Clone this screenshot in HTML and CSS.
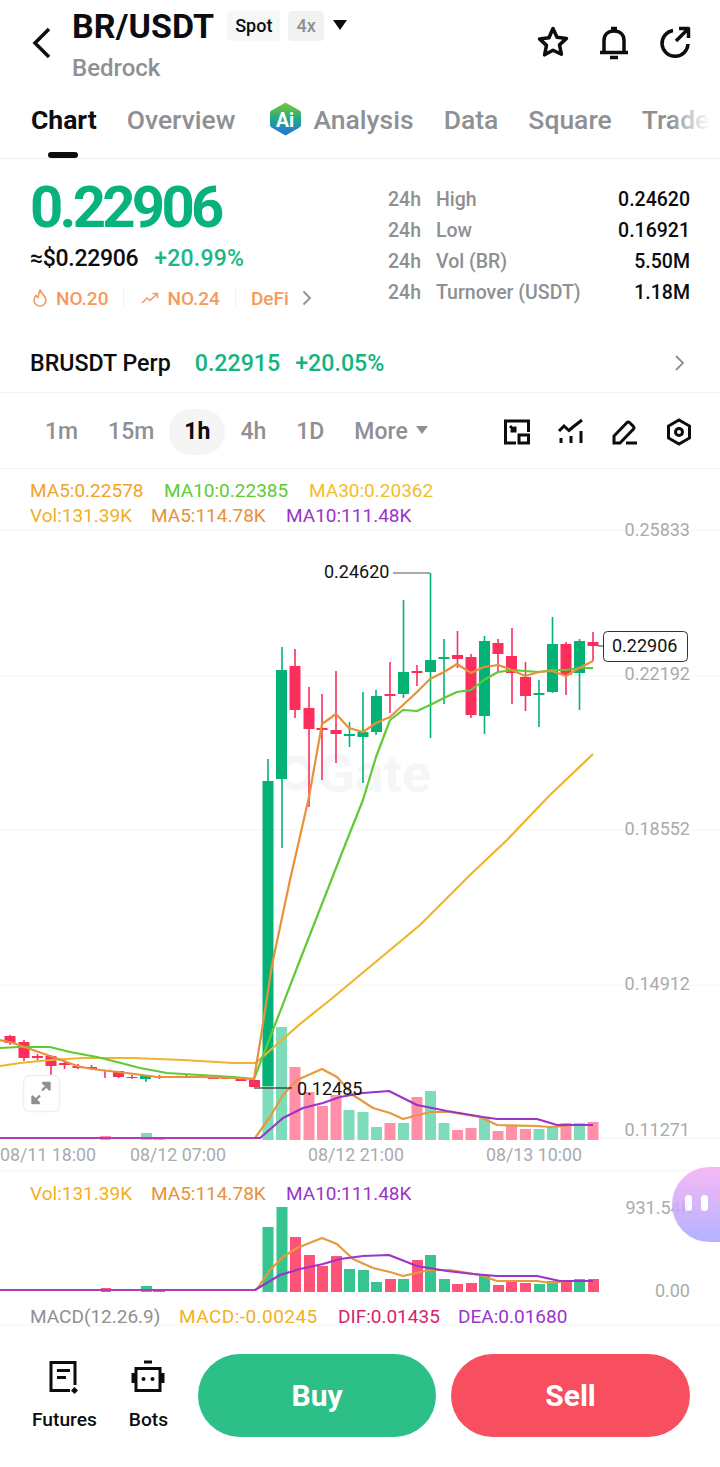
FILE: index.html
```html
<!DOCTYPE html>
<html lang="en">
<head>
  <meta charset="UTF-8" />
  <meta name="viewport" content="width=device-width, initial-scale=1.0" />
  <title>BR/USDT</title>
  <link rel="stylesheet" href="styles.css">
</head>
<body>
  <header class="top">
    <svg class="back" width="24" height="34" viewBox="0 0 24 34"><path d="M19 3 5 17l14 14" /></svg>
    <div class="pair">
      <div class="pair-line">
        <h1>BR/USDT</h1>
        <span class="badge">Spot</span>
        <span class="badge badge-grey">4x</span>
        <span class="caret"></span>
      </div>
      <div class="pair-name">Bedrock</div>
    </div>
    <div class="top-icons">
      <svg width="34" height="34" viewBox="0 0 34 34"><path d="M17 3.500l4 8.700 9.500 1.200-7 6.500 1.900 9.400L17 25.200l-8.400 4.600 1.900-9.400-7-6.500 9.500-1.200z" /></svg>
      <svg width="34" height="36" viewBox="0 0 34 36"><path d="M7 27V15.500C7 9.500 11 6 17 6s10 3.500 10 9.500V27M3 27.500h28M14 3.500h6M13 32.500h8" /></svg>
      <svg width="34" height="34" viewBox="0 0 34 34"><path d="M15 5.500A13 13 0 1 0 30 19M18 16 30 4M21 3.500h9.500V13" /></svg>
    </div>
  </header>

  <nav class="tabs">
    <a class="tab tab-on">Chart</a>
    <a class="tab">Overview</a>
    <a class="tab tab-ai">
      <svg width="33" height="36" viewBox="0 0 34 36">
        <defs>
          <linearGradient id="aiFill" x1="0" y1="0" x2="0" y2="1">
            <stop offset="0" stop-color="#7cc832" />
            <stop offset=".5" stop-color="#20a88a" />
            <stop offset="1" stop-color="#2a6fdc" />
          </linearGradient>
        </defs>
        <path fill="url(#aiFill)" d="M17 1l14 8a3 3 0 0 1 2 3v12a3 3 0 0 1-2 3l-14 8-14-8a3 3 0 0 1-2-3V12a3 3 0 0 1 2-3z" />
        <text class="ai-mark" x="16.500" y="26">Ai</text>
      </svg>
      Analysis
    </a>
    <a class="tab">Data</a>
    <a class="tab">Square</a>
    <a class="tab">Trade</a>
    <span class="tabs-fade"></span>
  </nav>

  <section class="stats">
    <div class="stats-left">
      <div class="price">0.22906</div>
      <div class="sub-price"><span>≈$0.22906</span><span class="up">+20.99%</span></div>
      <div class="tags">
        <svg class="tag-icon" width="16" height="18" viewBox="0 0 16 18"><path d="M8 1c.5 3 5.500 5 6 10a6 6 0 0 1-12 0c0-2 1-3.500 2-4.500.500 1 1 1.500 2 2C6.500 6 7 3.500 8 1z" /></svg>
        <span class="tag-text">NO.20</span>
        <i class="tag-sep"></i>
        <svg class="tag-icon" width="18" height="12" viewBox="0 0 18 12"><path d="M1 11l5-5 3 2.500L16 2M11.500 1.500H16.500V6" /></svg>
        <span class="tag-text">NO.24</span>
        <i class="tag-sep"></i>
        <span class="tag-text">DeFi</span>
        <svg class="tag-more" width="10" height="16" viewBox="0 0 10 16"><path d="M1.500 1.500 8 8l-6.500 6.500" /></svg>
      </div>
    </div>
    <div class="stats-right">
      <div class="stat-row"><span class="stat-h">24h</span><span class="stat-name">High</span><span class="stat-val">0.24620</span></div>
      <div class="stat-row"><span class="stat-h">24h</span><span class="stat-name">Low</span><span class="stat-val">0.16921</span></div>
      <div class="stat-row"><span class="stat-h">24h</span><span class="stat-name">Vol (BR)</span><span class="stat-val">5.50M</span></div>
      <div class="stat-row"><span class="stat-h">24h</span><span class="stat-name">Turnover (USDT)</span><span class="stat-val">1.18M</span></div>
    </div>
  </section>

  <section class="perp">
    <span class="perp-name">BRUSDT Perp</span>
    <span class="perp-num">0.22915</span>
    <span class="perp-num">+20.05%</span>
    <svg class="perp-more" width="11" height="18" viewBox="0 0 11 18"><path d="M2 2l7 7-7 7" /></svg>
  </section>

  <section class="times">
    <span class="time">1m</span>
    <span class="time">15m</span>
    <span class="time time-on">1h</span>
    <span class="time">4h</span>
    <span class="time">1D</span>
    <span class="time time-more">More<i class="more-caret"></i></span>
    <div class="tools">
      <svg width="28" height="28" viewBox="0 0 28 28"><path d="M13 25H2.500V3h23v11M7 8l5 5M7.500 13H12V8.500" /><rect x="16" y="17" width="9.500" height="8" /></svg>
      <svg width="28" height="28" viewBox="0 0 28 28"><path d="M2 13l5-5 5 4.500L16 9 25 2M4 20v5M14 18v7M24 13v12" /></svg>
      <svg width="28" height="28" viewBox="0 0 28 28"><path d="M3 25v-7L16 4.500a2 2 0 0 1 2.500 0l4 4a2 2 0 0 1 0 2.500L9 25zM15 25h11" /></svg>
      <svg width="28" height="28" viewBox="0 0 28 28"><path d="M14 2l10.500 6v12L14 26 3.500 20V8z" /><circle cx="14" cy="14" r="3.500" /></svg>
    </div>
  </section>

  <section class="chart">
    <svg class="chart-svg" width="720" height="856" viewBox="0 469 720 856">
      <!-- grid -->
      <path class="grid" d="M0 676H720M0 830H720M0 1138H720M0 1171H720M0 530H720M0 985H720" />
      <circle class="mark-ring" cx="296" cy="773" r="14" />
      <text class="mark" x="318" y="792">Gate</text>

      <text class="lg" x="30" y="497" fill="#f0a42a">MA5:0.22578</text>
      <text class="lg" x="164" y="497" fill="#5ecb36">MA10:0.22385</text>
      <text class="lg" x="309" y="497" fill="#f4bd2a">MA30:0.20362</text>
      <text class="lg" x="30" y="522" fill="#f2b01e">Vol:131.39K</text>
      <text class="lg" x="151" y="522" fill="#e8913a">MA5:114.78K</text>
      <text class="lg" x="286" y="522" fill="#9a35c8">MA10:111.48K</text>

      <!-- volume, upper panel -->
      <path class="vol-up" d="M262.500 1053h11v87h-11zM276 1027h11v113h-11zM343.500 1110h11v30h-11zM357.500 1112h11v28h-11zM371 1127h11v13h-11zM398 1123h11v17h-11zM425 1091h11v49h-11zM438.500 1123h11v17h-11zM479 1117h11v23h-11zM533.500 1129h11v11h-11zM547 1127h11v13h-11zM574 1123h11v17h-11zM141 1133h11v7h-11z" />
      <path class="vol-down" d="M289.500 1067h11v73h-11zM303.500 1092h11v48h-11zM317 1106h11v34h-11zM330.500 1095h11v45h-11zM384.500 1123h11v17h-11zM411.500 1097h11v43h-11zM452 1130h11v10h-11zM465.500 1128h11v12h-11zM492.500 1131h11v9h-11zM506 1125h11v15h-11zM520 1129h11v11h-11zM560.500 1123h11v17h-11zM587.500 1122h11v18h-11zM100 1136h11v4h-11zM153 1137h12v3h-12z" />

      <!-- candles -->
      <path class="wick-up" d="M268 759V1086M282 647V848M349.500 722V747M363 692V783M376 690V735M403.500 600V698M430.500 573V738M444 639V704M484.500 636V734M539 680V727M552.500 617V693M579.500 639V710M146 1075V1082" />
      <path class="wick-down" d="M295 649V718M309 687V807M322 694V780M336 671V763M390 662V713M417 665V686M457.500 631V668M471 654V718M498 639V672M512 628V704M525.500 662V711M566 642V695M593 632V661M10 1035V1045M24 1040V1061M37.500 1054V1060M51 1055V1078M64.500 1060V1069M78 1064V1069M91.500 1065V1070M105 1070V1078M118.500 1071V1078M132 1075V1079M159.500 1075V1079M186.500 1075V1078" />
      <path class="body-up" d="M262.500 781h11v305h-11zM276 670h11v109h-11zM344 734h11v2h-11zM357.500 732h11v5h-11zM371 696h11v36h-11zM398 672h11v22h-11zM425 660h11v12h-11zM438.500 657h11v2h-11zM479 641h11v75h-11zM533.500 693h11v2h-11zM547 644h11v48h-11zM574 641h11v32h-11zM140 1075h11v4h-11zM167.500 1076h11v1h-11z" />
      <path class="body-down" d="M289.500 666h11v44h-11zM303.500 708h11v21h-11zM316.500 728h11v2h-11zM330.500 730h11v4h-11zM384.500 694h11v2h-11zM411.500 671h11v2h-11zM452 655h11v4h-11zM465.500 657h11v58h-11zM492.500 643h11v11h-11zM506 656h11v17h-11zM520 677h11v19h-11zM560.500 644h11v31h-11zM587.500 642h11v4h-11zM4.500 1036h11v7h-11zM18.500 1042h11v16h-11zM32 1056h11v2h-11zM45.500 1056h11v10h-11zM59 1063h11v2h-11zM72.500 1066h11v2h-11zM86 1067h11v2h-11zM99.500 1070h11v1h-11zM113 1071h11v6h-11zM126.500 1077h11v1h-11zM154 1076h11v1h-11zM181 1076h11v1h-11zM195 1077h11v1h-11zM208 1077h11v2h-11zM221.500 1078h11v1h-11zM235.500 1079h11v2h-11zM249 1080h11v7h-11z" />

      <path class="line-ma30" d="M0 1066 20 1063 50 1060 83 1058 133 1058 183 1060 233 1063 255 1063 258 1061 300 1024 330 1000 360 975 390 950 420 925 445 900 470 875 507 840 550 795 593 754" />
      <path class="line-ma10" d="M0 1048 20 1047 50 1047 70 1052 97 1057 117 1062 140 1068 167 1073 200 1075 233 1077 254 1079 300 960 347 840 363 800 376 757 390 720 403 710 417 711 430 705 444 698 457 692 471 690 484 680 498 672 512 670 525 671 539 672 552 670 566 670 579 668 593 668" />
      <path class="line-ma5" d="M0 1040 13 1043 33 1050 53 1057 80 1067 100 1070 127 1073 157 1077 200 1077 233 1078 254 1079 262 1030 272 965 290 880 309 797 322 724 336 714 349 728 363 732 376 723 390 717 403 705 417 692 430 679 444 672 457 664 471 673 484 667 498 665 512 670 525 676 539 672 552 671 566 676 579 668 593 661" />

      <!-- volume averages, upper panel -->
      <path class="line-vol5" d="M255 1138 270 1117 283 1095 297 1080 322 1069 337 1077 353 1095 373 1108 390 1113 403 1119 430 1112 450 1112 480 1117 497 1125 537 1126 550 1127 567 1126" />
      <path class="line-vol10" d="M0 1138H255L260 1138 283 1118 303 1108 323 1103 340 1097 363 1093 389 1091 417 1105 447 1111 483 1117 497 1119 537 1119 557 1125 593 1125" />
      <path class="line-magenta" d="M0 1138H255" />

      <text class="axis" x="690" y="536">0.25833</text>
      <text class="axis" x="690" y="680">0.22192</text>
      <text class="axis" x="690" y="835">0.18552</text>
      <text class="axis" x="690" y="990">0.14912</text>
      <text class="axis" x="690" y="1136">0.11271</text>

      <path class="note-line" d="M393 573H430" />
      <text class="note" x="324" y="578">0.24620</text>
      <path class="note-line note-line-dark" d="M254 1088H292" />
      <text class="note" x="297" y="1095">0.12485</text>

      <rect class="price-box" x="603.500" y="631.500" width="84" height="30" rx="4" />
      <path class="note-line" d="M598 646H603" />
      <text class="note" x="612" y="652">0.22906</text>

      <rect class="expand" x="23.500" y="1075.500" width="36" height="36" rx="6" />
      <path class="expand-arrows" d="M43 1083h6.500v6.500zM32.500 1096.500v6.500H39zM47.500 1085 42 1090.500M34.500 1101 40 1095.500" />

      <text class="date" x="0" y="1161">08/11 18:00</text>
      <text class="date" x="130" y="1161">08/12 07:00</text>
      <text class="date" x="308" y="1161">08/12 21:00</text>
      <text class="date" x="486" y="1161">08/13 10:00</text>

      <!-- lower panel -->
      <text class="lg" x="30" y="1200" fill="#f2b01e">Vol:131.39K</text>
      <text class="lg" x="151" y="1200" fill="#e8913a">MA5:114.78K</text>
      <text class="lg" x="286" y="1200" fill="#9a35c8">MA10:111.48K</text>
      <text class="axis" x="692" y="1214">931.54K</text>
      <text class="axis" x="690" y="1297">0.00</text>

      <path class="sub-up" d="M262.500 1227h11v65h-11zM276.500 1207h11v85h-11zM344 1269h11v23h-11zM358 1270h11v22h-11zM371 1282h11v10h-11zM398 1279h11v13h-11zM425 1255h11v37h-11zM439 1279h11v13h-11zM479 1275h11v17h-11zM534 1284h11v8h-11zM547 1281h11v11h-11zM574 1279h11v13h-11zM141 1286h11v6h-11z" />
      <path class="sub-down" d="M290 1237h11v55h-11zM304 1255h11v37h-11zM317 1266h11v26h-11zM331 1256h11v36h-11zM385 1279h11v13h-11zM412 1260h11v32h-11zM452 1284h11v8h-11zM466 1283h11v9h-11zM493 1285h11v7h-11zM506 1281h11v11h-11zM520 1283h11v9h-11zM561 1280h11v12h-11zM588 1279h11v13h-11zM101 1288h10v4h-10zM153 1289h12v3h-12z" />
      <path class="line-vol5" d="M257 1289 270 1270 283 1257 297 1248 322 1238 337 1244 353 1259 373 1268 390 1272 403 1276 430 1270 450 1270 480 1275 497 1281 537 1281 550 1283 567 1281" />
      <path class="line-vol10" d="M0 1290H255L260 1287 280 1275 300 1269 323 1264 340 1259 363 1256 389 1255 417 1266 447 1271 473 1274 497 1276 537 1276 560 1281 593 1281" />
      <path class="line-magenta" d="M0 1290H255" />

      <path class="grid" d="M0 1325H720" />
      <text class="lg" x="30" y="1323" fill="#8e9093">MACD(12.26.9)</text>
      <text class="lg lg-wide" x="179" y="1323" fill="#f2b01e">MACD:-0.00245</text>
      <text class="lg" x="338" y="1323" fill="#d6246e">DIF:0.01435</text>
      <text class="lg" x="458" y="1323" fill="#9a35c8">DEA:0.01680</text>
    </svg>
    <div class="blob"><i class="blob-eye"></i><i class="blob-eye"></i></div>
  </section>

  <footer class="bottom">
    <a class="shortcut">
      <svg width="36" height="36" viewBox="0 0 36 36"><path d="M29 26V3.500H5V31.500H24M11 11.500h13M11 18.500h9" /><rect class="dot" x="26" y="29" width="5" height="5" transform="rotate(45 28.500 31.500)" /></svg>
      Futures
    </a>
    <a class="shortcut">
      <svg width="36" height="36" viewBox="0 0 36 36"><path d="M6 9.500h24v22H6zM14 3h8M3 14v10M33 14v10" /><circle class="dot" cx="13.500" cy="20" r="2" /><circle class="dot" cx="22.500" cy="20" r="2" /></svg>
      Bots
    </a>
    <button class="trade trade-buy">Buy</button>
    <button class="trade trade-sell">Sell</button>
  </footer>
</body>
</html>
```

FILE: styles.css
```css
body {
  margin: 0;
  width: 720px;
  height: 1467px;
  overflow: hidden;
  background: white;
  color: #0b0d10;
  font-family: Roboto, "Liberation Sans", sans-serif;
  font-weight: 500;
}

/* top bar */
.top {
  display: flex;
  height: 97px;
  box-sizing: border-box;
  padding: 8px 28px 0 30px;
}
.back {
  margin: 18px 18px 0 0;
  fill: none;
  stroke: #0b0d10;
  stroke-width: 3.5;
}
.pair {
  flex: 1;
}
.pair-line {
  display: flex;
  align-items: center;
  height: 36px;
}
h1 {
  margin: 0 13px 0 0;
  font-size: 34px;
  font-weight: 700;
  letter-spacing: 0.1px;
}
.badge {
  padding: 0 8px;
  height: 30px;
  line-height: 29px;
  margin-right: 8px;
  background: #f6f7f7;
  border-radius: 4px;
  font-size: 18px;
}
.badge-grey {
  background: #f1f3f3;
  color: #8e9093;
}
.caret {
  width: 0;
  height: 0;
  margin-left: 1px;
  margin-top: -2px;
  border-left: 7px solid transparent;
  border-right: 7px solid transparent;
  border-top: 10px solid #0b0d10;
}
.pair-name {
  margin-top: 10px;
  font-size: 24px;
  color: #8e9093;
}
.top-icons {
  display: flex;
  gap: 27px;
  margin-top: 17px;
}
.top-icons svg {
  fill: none;
  stroke: #0b0d10;
  stroke-width: 3.5;
  stroke-linejoin: round;
}

/* tabs */
.tabs {
  position: relative;
  display: flex;
  height: 62px;
  box-sizing: border-box;
  padding: 4px 0 0 31px;
  gap: 30px;
  overflow: hidden;
  border-bottom: 1px solid #f0f1f2;
}
.tab {
  display: flex;
  align-items: center;
  gap: 11px;
  height: 36px;
  font-size: 26.500px;
  color: #8e9093;
  white-space: nowrap;
}
.tab-ai {
  margin-left: 4px;
}
.tab-ai svg {
  flex: none;
}
.tab-on {
  position: relative;
  font-weight: 700;
  color: #0b0d10;
}
.tab-on::after {
  content: "";
  position: absolute;
  left: 17px;
  bottom: -21px;
  width: 30px;
  height: 6px;
  border-radius: 3px;
  background: #0b0d10;
}
.ai-mark {
  fill: white;
  font-size: 20px;
  font-weight: 700;
  text-anchor: middle;
}
.tabs-fade {
  position: absolute;
  top: 0;
  right: 0;
  width: 50px;
  height: 61px;
  background: linear-gradient(to right, rgba(255,255,255,0), white 80%);
}

/* price block */
.stats {
  display: flex;
  height: 174px;
  box-sizing: border-box;
  padding: 21px 30px 0;
}
.stats-left {
  width: 358px;
}
.price {
  font-size: 58px;
  line-height: 54px;
  font-weight: 700;
  letter-spacing: -3.700px;
  color: #08b27c;
}
.sub-price {
  display: flex;
  gap: 16px;
  margin-top: 10px;
  font-size: 23px;
  line-height: 30px;
  letter-spacing: -0.3px;
}
.up {
  color: #1cb784;
  letter-spacing: 0.2px;
}
.tags {
  display: flex;
  align-items: center;
  margin-top: 9px;
  height: 30px;
  font-size: 19px;
  color: #f59a5c;
}
.tag-icon {
  fill: none;
  stroke: #f59a5c;
  stroke-width: 1.6;
}
.tag-icon:first-child {
  margin-left: 2px;
}
.tag-text {
  margin-left: 8px;
}
.tag-sep {
  width: 1px;
  height: 20px;
  margin: 0 17px 0 15px;
  background: #f2f3f3;
}
.tag-sep + .tag-text {
  margin-left: -2px;
}
.tag-more {
  margin-left: 13px;
  fill: none;
  stroke: #8e9093;
  stroke-width: 1.8;
}
.stats-right {
  flex: 1;
  margin-top: 4px;
}
.stat-row {
  display: flex;
  height: 31px;
  line-height: 31px;
  font-size: 19.500px;
  color: #8e9093;
}
.stat-h {
  width: 48px;
}
.stat-name {
  flex: 1;
}
.stat-val {
  color: #0b0d10;
}

/* perp row */
.perp {
  display: flex;
  align-items: center;
  gap: 15px;
  height: 60px;
  box-sizing: border-box;
  padding: 1px 35px 0 30px;
  border-bottom: 1px solid #f0f1f2;
  font-size: 23.200px;
}
.perp-name {
  margin-right: 9px;
}
.perp-num {
  color: #13b47f;
}
.perp-more {
  margin-left: auto;
  fill: none;
  stroke: #8e9093;
  stroke-width: 1.8;
}

/* timeframes */
.times {
  display: flex;
  align-items: center;
  height: 76px;
  box-sizing: border-box;
  padding: 2px 27px 0 30px;
  border-bottom: 1px solid #f0f1f2;
  font-size: 23px;
  color: #8e9093;
}
.time {
  padding: 0 15px;
  height: 46px;
  line-height: 46px;
}
.time-on {
  background: #f5f5f5;
  border-radius: 23px;
  color: #0b0d10;
  font-weight: 700;
}
.time-more {
  display: flex;
  align-items: center;
}
.more-caret {
  width: 0;
  height: 0;
  margin: -3px 0 0 8px;
  border-left: 6.500px solid transparent;
  border-right: 6.500px solid transparent;
  border-top: 8px solid #8e9093;
}
.tools {
  display: flex;
  gap: 26px;
  margin-left: auto;
}
.tools svg {
  fill: none;
  stroke: #0b0d10;
  stroke-width: 3;
}

/* chart */
.chart {
  position: relative;
  height: 856px;
}
.chart-svg {
  display: block;
  overflow: visible;
  font-family: Roboto, "Liberation Sans", sans-serif;
}
.chart-svg path {
  fill: none;
  stroke-linejoin: round;
}
.grid {
  stroke: #f3f4f5;
  stroke-width: 1;
}
.mark {
  font-size: 54px;
  font-weight: 700;
  fill: #f5f6f7;
}
.mark-ring {
  fill: none;
  stroke: #f5f6f7;
  stroke-width: 7;
}
.lg {
  font-size: 19px;
  font-weight: 400;
}
.lg-wide {
  letter-spacing: 0.45px;
}
.axis {
  font-size: 18px;
  font-weight: 400;
  fill: #a9abad;
  text-anchor: end;
}
.date {
  font-size: 17.800px;
  font-weight: 400;
  fill: #a9abad;
}
.note {
  font-size: 18px;
  font-weight: 400;
  fill: #111;
}
.chart-svg .note-line {
  stroke: #555;
  stroke-width: 1.2;
}
.chart-svg .note-line-dark {
  stroke: #111;
}
.price-box {
  fill: white;
  stroke: #333;
}
.expand {
  fill: white;
  stroke: #f0f0f0;
  stroke-width: 1.500;
}
.chart-svg .expand-arrows {
  fill: #8e9093;
  stroke: #8e9093;
  stroke-width: 2.400;
}
.chart-svg .vol-up { fill: #7fdcbb; }
.chart-svg .vol-down { fill: #ff90a8; }
.chart-svg .wick-up { stroke: #04b276; stroke-width: 1.600; }
.chart-svg .wick-down { stroke: #f9305f; stroke-width: 1.600; }
.chart-svg .body-up { fill: #04b276; }
.chart-svg .body-down { fill: #fb2e5c; }
.chart-svg .sub-up { fill: #36c490; }
.chart-svg .sub-down { fill: #ff5277; }
.chart-svg .line-ma5 { stroke: #e8913a; stroke-width: 2.200; }
.chart-svg .line-ma10 { stroke: #5ecb36; stroke-width: 2.200; }
.chart-svg .line-ma30 { stroke: #eeb52a; stroke-width: 2.200; }
.chart-svg .line-vol5 { stroke: #e59a3c; stroke-width: 2.200; }
.chart-svg .line-vol10 { stroke: #9a35c8; stroke-width: 2.200; }
.chart-svg .line-magenta { stroke: #b53bb0; stroke-width: 2.200; }

.blob {
  position: absolute;
  top: 698px;
  right: 0;
  display: flex;
  gap: 9px;
  align-items: flex-start;
  width: 48px;
  height: 75px;
  box-sizing: border-box;
  padding: 28px 0 0 13px;
  border-radius: 38px 0 0 38px;
  background: linear-gradient(#f6b0f4, #a9a8ff);
  opacity: 0.880;
}
.blob-eye {
  width: 7px;
  height: 16px;
  border-radius: 4px;
  background: white;
}

/* bottom bar */
.bottom {
  display: flex;
  align-items: flex-start;
  padding: 29px 30px 0 32px;
}
.shortcut {
  display: flex;
  flex-direction: column;
  align-items: center;
  gap: 13px;
  margin-top: 5px;
  font-size: 19.200px;
  color: #0b0d10;
}
.shortcut + .shortcut {
  margin-left: 32px;
}
.shortcut svg {
  fill: none;
  stroke: #0b0d10;
  stroke-width: 3;
}
.shortcut .dot {
  fill: #0b0d10;
  stroke: none;
}
.trade {
  height: 83px;
  border: none;
  border-radius: 42px;
  font-family: inherit;
  font-size: 30px;
  font-weight: 700;
  color: white;
}
.trade-buy {
  width: 238px;
  margin-left: 30px;
  background: #2cc088;
}
.trade-sell {
  width: 239px;
  margin-left: 15px;
  background: #f74f60;
}
```
